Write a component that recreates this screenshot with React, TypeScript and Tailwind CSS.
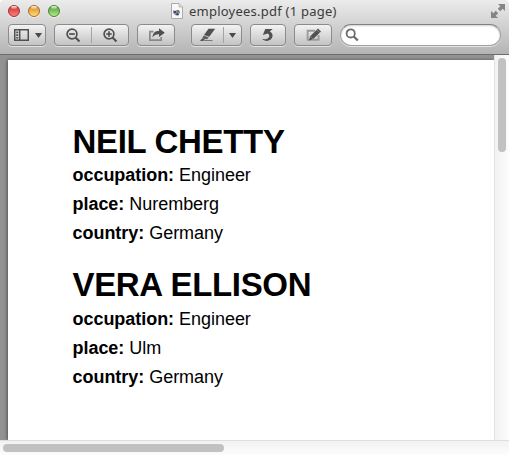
import type { ReactNode } from "react";

type Employee = { name: string; occupation: string; place: string; country: string };

const employees: Employee[] = [
  { name: "NEIL CHETTY", occupation: "Engineer", place: "Nuremberg", country: "Germany" },
  { name: "VERA ELLISON", occupation: "Engineer", place: "Ulm", country: "Germany" },
];

function Light({ className }: { className: string }) {
  return (
    <span className={`relative block h-3 w-3 rounded-full border shadow-[0_1px_0_#ffffff90] ${className}`}>
      <span className="absolute left-[2px] top-0 h-[3px] w-[6px] rounded-full bg-gradient-to-b from-white/90 to-white/20" />
    </span>
  );
}

function Button({ className, children }: { className: string; children: ReactNode }) {
  return (
    <button
      className={`flex h-[22px] shrink-0 items-center rounded-[4px] border border-[#8b8b8b] bg-gradient-to-b from-[#f3f3f3] to-[#c3c3c3] shadow-[0_1px_0_#e2e2e2] ${className}`}
    >
      {children}
    </button>
  );
}

function Caret() {
  return (
    <svg width="7" height="5" viewBox="0 0 7 5" className="shrink-0">
      <path d="M0 0h7L3.5 5z" fill="#4a4a4a" />
    </svg>
  );
}

function Divider() {
  return <span className="h-4 w-px shrink-0 bg-[#a4a4a4]" />;
}

function Magnifier({ plus }: { plus?: boolean }) {
  return (
    <svg width="15" height="15" viewBox="0 0 15 15" fill="none" stroke="#505050" className="shrink-0">
      <circle cx="6" cy="6" r="4.9" strokeWidth="1.7" />
      <path d="M9.5 9.5L13.5 13.5" strokeWidth="2.1" />
      <path d={plus ? "M3.2 6h5.6M6 3.2v5.6" : "M3.2 6h5.6"} strokeWidth="1.7" />
    </svg>
  );
}

function Toolbar() {
  return (
    <div className="flex h-[22px]">
      <Button className="w-[38px] pl-[5px]">
        <svg width="15" height="12" viewBox="0 0 15 12">
          <path d="M.75.75h13.5v10.5H.75zM5.7 1v10" fill="none" stroke="#505050" strokeWidth="1.5" />
          <path d="M2.2 2.5h2v1.7h-2zM2.2 5.2h2v1.7h-2zM2.2 7.9h2v1.7h-2z" fill="#505050" />
        </svg>
        <span className="w-[6px]" />
        <Caret />
      </Button>
      <Button className="ml-2 w-[75px] pl-[11px]">
        <Magnifier />
        <span className="w-[10px]" />
        <Divider />
        <span className="w-[11px]" />
        <Magnifier plus />
      </Button>
      <Button className="ml-2 w-[38px] pl-[10px]">
        <svg width="18" height="14" viewBox="0 0 18 14">
          <path d="M5.5 3.7H1.9v8.4h11.3V9" fill="none" stroke="#888" strokeWidth="1.7" />
          <path d="M4.5 9.5C4.8 5 7 3.1 11 3.1V.3L16.8 4.7 11 9V6.3C8.2 6.2 6 7.2 4.5 9.5z" fill="#505050" />
        </svg>
      </Button>
      <Button className="ml-4 w-[51px] pl-[7px]">
        <svg width="17" height="14" viewBox="0 0 17 14">
          <path d="M9.5.8h6.7L10.2 8.8 5 7z" fill="#505050" />
          <path d="M4.7 7.6l5 1.9-1.6 1.7-5-.8z" fill="#5c5c5c" />
          <path d="M2.9 10.7h3.3L4.2 13H1z" fill="#505050" />
          <path d="M5 12.5h8.5" stroke="#777" />
        </svg>
        <span className="w-[7px]" />
        <Divider />
        <span className="w-[5px]" />
        <Caret />
      </Button>
      <Button className="ml-2 w-[36px] pl-[10px]">
        <svg width="14" height="14" viewBox="0 0 14 14">
          <path d="M1.8 6.9L4.3 1h7.4L8.8 3.5c2.1 1 3.1 2.8 2.7 5.1-.5 2.9-3.4 4.5-6.3 4.3-1.6-.1-3-.8-3.9-1.8 3.7.4 6.5-.4 6.9-2.7.2-1-.2-2-1.4-3z" fill="#505050" />
        </svg>
      </Button>
      <Button className="ml-2 w-[38px] pl-[11px]">
        <svg width="16" height="14" viewBox="0 0 16 14">
          <path d="M9 2.7H1.6v9h11V7" fill="none" stroke="#9b9b9b" strokeWidth="1.9" />
          <path d="M3 12.5l1.2-4.2L12 .6l3 2.8-7.8 7.7z" fill="#505050" />
          <path d="M4.3 8.3l2.8 2.6M10.8 1.8l2.9 2.8" stroke="#aaa" strokeWidth=".6" />
        </svg>
      </Button>
      <div className="ml-2 flex w-[161px] items-center rounded-full border border-[#a0a0a0] border-t-[#808080] bg-white pl-[4px] shadow-[inset_0_1px_2px_#00000030,0_1px_0_#e4e4e4]">
        <svg width="14" height="14" viewBox="0 0 14 14" fill="none" stroke="#6b6b6b">
          <circle cx="5.7" cy="5.4" r="4.1" strokeWidth="1.8" />
          <path d="M8.6 8.3L12.8 12.5" strokeWidth="2.3" />
        </svg>
      </div>
    </div>
  );
}

function Field({ label, value }: { label: string; value: string }) {
  return (
    <p className="h-[29px] whitespace-nowrap text-[18px] leading-[29px]">
      <b className="tracking-[-0.04px]">{label}:</b> <span className="tracking-[-0.04px]">{value}</span>
    </p>
  );
}

export default function App() {
  return (
    <div className="flex h-[455px] w-[509px] flex-col overflow-hidden bg-white font-['Liberation_Sans',Arial,sans-serif]">
      <header className="h-[55px] shrink-0 rounded-t-[4px] border-b border-[#6d6d6d] bg-gradient-to-b from-[#ececec] to-[#b4b4b4] px-2">
        <div className="flex h-6 items-start pt-[5px]">
          <div className="flex gap-2">
            <Light className="border-[#9c3336] bg-gradient-to-b from-[#c9252d] to-[#ff8080]" />
            <Light className="border-[#a56a28] bg-gradient-to-b from-[#d98620] to-[#ffdf70]" />
            <Light className="border-[#467f30] bg-gradient-to-b from-[#4f9a35] to-[#b0ee86]" />
          </div>
          <svg width="12" height="16" viewBox="0 0 12 16" className="-mt-[2px] ml-[111px] shrink-0">
            <path d="M.5.5H8l3.5 3.5v11.5H.5z" fill="#f8f8f8" stroke="#aaa" />
            <path d="M8 .5V4h3.5" fill="#ddd" stroke="#aaa" strokeWidth=".7" />
            <path d="M2 7l2 1 1-1 4 1v2l-2 3-3-1-2-2z" fill="#8c96a5" />
            <path d="M3 8h2v2H3zM6 9l2 3H5z" fill="#394a72" />
            <path d="M6 7h2v2H6z" fill="#9c6b55" />
          </svg>
          <h1 className="-mt-[3px] ml-[6px] whitespace-nowrap font-['Noto_Sans',sans-serif] text-[13px] leading-[18px] tracking-[0.23px] text-[#3a3a3a]">employees.pdf (1 page)</h1>
          <svg width="14" height="14" viewBox="0 0 14 14" fill="#858585" className="-mt-[1px] ml-auto mr-[-4px] shrink-0">
            <path d="M7 0h7v7l-2.3-2.3L9.2 7.2 6.8 4.8l2.5-2.5zM0 7l2.3 2.3 2.5-2.5 2.4 2.4-2.5 2.5L7 14H0z" />
          </svg>
        </div>
        <Toolbar />
      </header>
      <div className="flex min-h-0 flex-1">
        <main className="min-w-0 flex-1 bg-[#929292] pl-2 pt-[5px]">
          <article className="flex h-full flex-col gap-[19px] bg-white pl-[64.5px] pt-[64px] text-black shadow-[-1px_0_3px_#00000070]">
            {employees.map((e) => (
              <section key={e.name}>
                <h2 className="h-[37px] whitespace-nowrap text-[33px] font-bold leading-[36px] tracking-[-0.33px] last-of-type:mb-0 [section+section_&]:h-[38px]">{e.name}</h2>
                <Field label="occupation" value={e.occupation} />
                <Field label="place" value={e.place} />
                <Field label="country" value={e.country} />
              </section>
            ))}
          </article>
        </main>
        <div className="w-[15px] border-l border-[#e2e2e2] bg-gradient-to-r from-[#f2f2f2] to-[#fcfcfc] pl-[3px] pt-[3px]">
          <div className="h-[94px] w-2 rounded-full bg-[#c1c1c1]" />
        </div>
      </div>
      <div className="h-[15px] shrink-0 rounded-b-[4px] border-t border-[#dedede] bg-gradient-to-b from-[#f2f2f2] to-[#fcfcfc] pl-[3px] pt-[3px]">
        <div className="h-2 w-[221px] rounded-full bg-[#c1c1c1]" />
      </div>
    </div>
  );
}
